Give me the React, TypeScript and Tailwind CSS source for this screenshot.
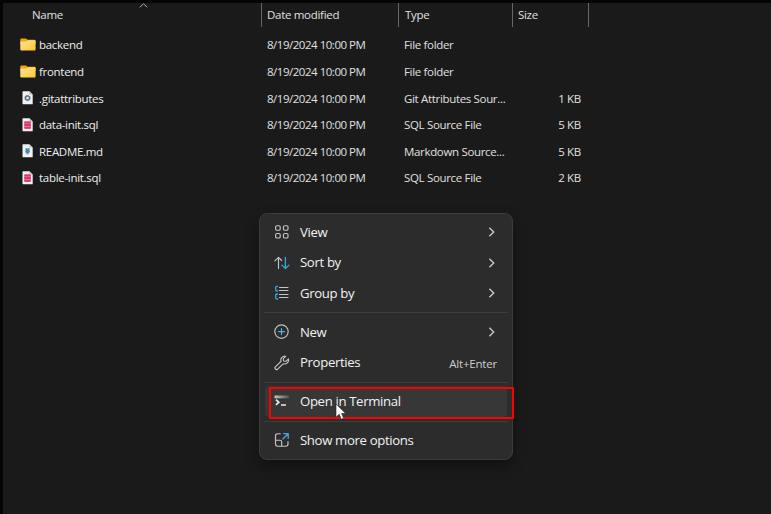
import type { ReactNode } from "react";

type IconName = "folder" | "gear" | "sql" | "md";

const files: { icon: IconName; name: string; type: string; size: string }[] = [
  { icon: "folder", name: "backend", type: "File folder", size: "" },
  { icon: "folder", name: "frontend", type: "File folder", size: "" },
  { icon: "gear", name: ".gitattributes", type: "Git Attributes Sour...", size: "1 KB" },
  { icon: "sql", name: "data-init.sql", type: "SQL Source File", size: "5 KB" },
  { icon: "md", name: "README.md", type: "Markdown Source...", size: "5 KB" },
  { icon: "sql", name: "table-init.sql", type: "SQL Source File", size: "2 KB" },
];

function FileIcon({ icon }: { icon: IconName }) {
  if (icon === "folder")
    return (
      <svg width="16" height="14" viewBox="0 0 16 14" className="shrink-0">
        <defs>
          <linearGradient id="folder" x1="0" y1="0" x2="1" y2="1">
            <stop offset="0" stopColor="#ffe69a" />
            <stop offset="1" stopColor="#fbc52d" />
          </linearGradient>
        </defs>
        <path d="M0.3 6V1.6Q.3.4 1.5.4H6L7.6 1.8H14.5Q15.6 1.8 15.6 2.9V6Z" fill="#eda70c" />
        <path d="M.3 4Q.3 3.5 1 3.5H6.2L8 2.2H14.6Q15.6 2.2 15.6 3.2V11.4Q15.6 12.5 14.6 12.5H1.4Q.3 12.5 .3 11.4Z" fill="url(#folder)" />
      </svg>
    );
  return (
    <svg width="16" height="14" viewBox="0 0 16 14" className="shrink-0">
      <path d="M3 .3H9.4L12.7 3.6V13.2H3Q2.5 13.2 2.5 12.6V.9Q2.5.3 3 .3Z" fill="#f1f1f1" />
      <path d="M9.4.3V3.6H12.7Z" fill="#b9b9b9" />
      {icon === "gear" && (
        <>
          <circle cx="7.5" cy="7" r="2" fill="none" stroke="#5c7380" strokeWidth="1.4" />
          <circle cx="7.5" cy="7" r="2.8" fill="none" stroke="#5c7380" strokeWidth=".8" strokeDasharray="1.1 1.1" />
        </>
      )}
      {icon === "sql" && (
        <>
          <rect x="4.2" y="3.4" width="6.7" height="7.4" rx="1" fill="#ea6d92" />
          <g fill="#e2336a">
            <rect x="4.2" y="3.4" width="6.7" height="1.9" rx=".7" />
            <rect x="4.2" y="6.1" width="6.7" height="1.9" rx=".7" />
            <rect x="4.2" y="8.9" width="6.7" height="1.9" rx=".7" />
          </g>
        </>
      )}
      {icon === "md" && <path d="M5.5 4.2H9.6V7.5H10.4L7.5 10.4L4.6 7.5H5.5Z" fill="#4390b4" />}
    </svg>
  );
}

function MenuIcon({ children }: { children: ReactNode }) {
  return (
    <svg width="16" height="16" viewBox="0 0 16 16" fill="none" stroke="#c4c4c4" strokeWidth="1.15" strokeLinecap="round" strokeLinejoin="round" className="shrink-0">
      {children}
    </svg>
  );
}

const icons = {
  view: (
    <MenuIcon>
      <rect x="1.6" y="1.7" width="4.6" height="4.5" rx="1.3" />
      <rect x="9.4" y="1.7" width="4.6" height="4.5" rx="1.3" />
      <rect x="1.6" y="9.5" width="4.6" height="4.5" rx="1.3" />
      <rect x="9.4" y="9.5" width="4.6" height="4.5" rx="1.3" />
    </MenuIcon>
  ),
  sort: (
    <MenuIcon>
      <path d="M4.5 13.5V2.3M.9 5.8L4.5 2.3L7.7 5.5" />
      <path d="M11.4 2.3V13.5M7.9 10.1L11.4 13.5L14.9 10.1" stroke="#3fa4dc" strokeWidth="1.3" />
    </MenuIcon>
  ),
  group: (
    <MenuIcon>
      <path d="M3.6 1.4H3Q1.7 1.4 1.7 2.6V4.8Q1.7 6 3 6H3.6M3.6 9H3Q1.7 9 1.7 10.2V12.8Q1.7 14 3 14H3.6" stroke="#3fa4dc" strokeWidth="1.3" />
      <path d="M5.5 2.5H14M5.5 5.5H14M5.5 9.5H14M5.5 12.5H14" />
    </MenuIcon>
  ),
  new: (
    <MenuIcon>
      <circle cx="7.5" cy="7.6" r="6.7" />
      <path d="M7.5 4.6V10.6M4.5 7.6H10.5" stroke="#45b4ec" strokeWidth="1.2" />
    </MenuIcon>
  ),
  properties: (
    <MenuIcon>
      <path d="M10.2 1.2C7.8 1.5 6.3 3.8 7 6.3L1.4 11.8C.1 13.2 2.2 15.5 3.7 14.2L9.1 8.8C12.3 9.8 15.3 7 14.4 3.9L11.9 6.3L9.6 6L9.3 3.7L11.7 1.3Q11.1 1.1 10.2 1.2Z" />
    </MenuIcon>
  ),
  terminal: (
    <svg width="16" height="16" viewBox="0 0 16 16" className="shrink-0">
      <defs>
        <linearGradient id="bar" x1="0" x2="1">
          <stop offset="0" stopColor="#cacaca" />
          <stop offset="1" stopColor="#505050" />
        </linearGradient>
      </defs>
      <path d="M.5 1.5H15V4.3H.5Z" fill="url(#bar)" />
      <path d="M2 5.6L4.8 8.2L2 10.9M7 11H12" fill="none" stroke="#ececec" strokeWidth="1.7" />
    </svg>
  ),
  more: (
    <MenuIcon>
      <path d="M6.3 1.7H3.8Q1.5 1.7 1.5 4V12Q1.5 14.2 3.8 14.2H11.7Q14 14.2 14 12V9.5M1.5 8.2H5.9Q7.7 8.2 7.7 10V14.2" />
      <path d="M8.9 6.9L14 1.8M9.6 1.6H14.2V6.2" stroke="#3fa4dc" strokeWidth="1.4" />
    </MenuIcon>
  ),
};

function Item({ icon, label, arrow, shortcut, active }: { icon: ReactNode; label: string; arrow?: boolean; shortcut?: string; active?: boolean }) {
  return (
    <div className={`mx-[5px] flex h-[30.6px] items-center rounded pl-[9px] pr-[10px] ${active ? "bg-[#373737]" : ""}`}>
      {icon}
      <span className="ml-[10px] grow whitespace-nowrap pt-[0.8px] text-[13.2px] tracking-[-0.36px] text-[#f2f2f2]">{label}</span>
      {shortcut && <span className="pt-[0.8px] text-[11.5px] tracking-[-0.2px] text-[#cecece]">{shortcut}</span>}
      {arrow && (
        <svg width="16" height="16" viewBox="0 0 16 16" fill="none" stroke="#c8c8c8" strokeWidth="1.4">
          <path d="M8.4 3.7L12.7 8L8.4 12.3" />
        </svg>
      )}
    </div>
  );
}

function Separator() {
  return (
    <div className="flex h-[8.2px] items-center px-1">
      <div className="h-px grow bg-[#3d3d3d]" />
    </div>
  );
}

export default function App() {
  return (
    <div className="relative h-[514px] w-[771px] overflow-hidden border-l-[3px] border-t-[3px] border-[#050505] bg-[#1a1a1a] font-['Open_Sans','Noto_Sans',sans-serif] text-[11.5px] tracking-[-0.3px] text-[#e0e0e0]">
      <div className="flex h-6 items-center leading-none">
        <div className="relative flex h-6 w-[259px] items-center border-r border-[#666] pl-[29px]">
          <span>Name</span>
          <svg className="absolute left-[136px] top-0" width="9" height="5" viewBox="0 0 9 5" fill="none" stroke="#aaa">
            <path d="M.7 4.3L4.5.8L8.3 4.3" />
          </svg>
        </div>
        <div className="flex h-6 w-[137px] items-center border-r border-[#666] pl-[5px]">Date modified</div>
        <div className="flex h-6 w-[114px] items-center border-r border-[#666] pl-[6px]">Type</div>
        <div className="flex h-6 w-[76px] items-center border-r border-[#666] pl-[5px]">Size</div>
      </div>
      <div className="pt-[4.8px]">
        {files.map((f) => (
          <div key={f.name} className="flex h-[26.6px] items-center whitespace-nowrap pl-[17px]">
            <FileIcon icon={f.icon} />
            <span className="ml-[3px] w-[228px] text-[#eeeeee]">{f.name}</span>
            <span className="w-[137px] tracking-[-0.48px]">8/19/2024 10:00 PM</span>
            <span className="w-[114px] tracking-[-0.33px]">{f.type}</span>
            <span className="w-[63px] text-right">{f.size}</span>
          </div>
        ))}
      </div>

      <div className="absolute left-[256px] top-[210px] h-[247px] w-[254px] rounded-lg border border-[#3b3b3b] bg-[#2c2c2c] pt-[3px] shadow-[0_6px_14px_rgba(0,0,0,0.35)]">
        <Item icon={icons.view} label="View" arrow />
        <Item icon={icons.sort} label="Sort by" arrow />
        <Item icon={icons.group} label="Group by" arrow />
        <Separator />
        <Item icon={icons.new} label="New" arrow />
        <Item icon={icons.properties} label="Properties" shortcut="Alt+Enter" />
        <Separator />
        <Item icon={icons.terminal} label="Open in Terminal" active />
        <Separator />
        <Item icon={icons.more} label="Show more options" />
      </div>

      <div className="absolute left-[266px] top-[384px] h-[32px] w-[245px] rounded-[1px] border-2 border-[#ff0000]" />
      <svg className="absolute left-[332px] top-[400px]" width="12" height="19" viewBox="0 0 12 19">
        <path d="M1 1V14.2L4.2 11.3L6.3 16.3L8.7 15.3L6.6 10.5H10.7Z" fill="#fff" stroke="#222" strokeWidth=".6" />
      </svg>
    </div>
  );
}
